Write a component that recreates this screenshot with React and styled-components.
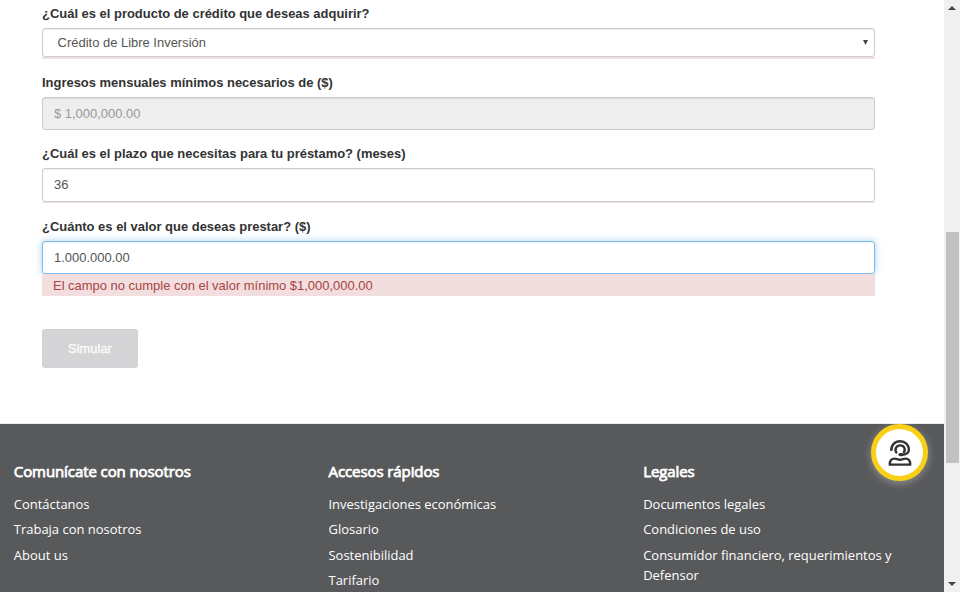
import React from "react";
import styled, { createGlobalStyle } from "styled-components";

const GlobalStyle = createGlobalStyle`
  * { box-sizing: border-box; }
  body { margin: 0; background: #fff; overflow: hidden; }
`;

const Page = styled.div`
  display: flex;
  width: 960px;
  height: 592px;
  overflow: hidden;
  font-family: "Liberation Sans", Arial, sans-serif;
  font-size: 12.96px;
`;

const Content = styled.main`
  width: 944px;
  height: 592px;
  display: flex;
  flex-direction: column;
`;

const Form = styled.form`
  height: 424px;
  flex: none;
  padding: 4px 69px 0 42px;
  border-bottom: 1px solid #ececee;
`;

const Field = styled.div`
  height: ${(p) => p.$height}px;
`;

const Label = styled.label`
  display: block;
  width: max-content;
  height: 20px;
  line-height: 20px;
  margin-bottom: 4px;
  font-size: 12.96px;
  font-weight: 700;
  color: #333;
`;

const Control = styled.div`
  display: flex;
  align-items: center;
  justify-content: space-between;
  height: ${(p) => p.$height}px;
  padding: 0 6px ${(p) => p.$lift || 0}px ${(p) => p.$indent || 11}px;
  border: 1px solid ${(p) => (p.$focused ? "#7fbcec" : "#ccc")};
  border-radius: 3px;
  background: ${(p) => (p.$disabled ? "#eee" : "#fff")};
  color: ${(p) => (p.$disabled ? "#999" : "#555")};
  box-shadow: ${(p) =>
    p.$focused
      ? "inset 0 1px 1px rgba(0,0,0,.075), 0 0 7px rgba(102,175,233,.6)"
      : "inset 0 1px 1px rgba(0,0,0,.075)"};
`;

const ErrorBar = styled.div`
  position: relative;
  height: ${(p) => p.$height}px;
  padding-left: 11px;
  line-height: 24px;
  background: #f2dede;
  color: #a94442;
`;

const SubmitButton = styled.button`
  display: block;
  width: 96px;
  height: 39px;
  padding: 0;
  border: 0;
  border-radius: 3px;
  background: #d4d4d6;
  color: #fafafa;
  font: 400 12.95px "Liberation Sans", Arial, sans-serif;
  -webkit-text-stroke: 0.4px #fafafa;
`;

const Footer = styled.footer`
  position: relative;
  height: 168px;
  display: grid;
  grid-template-columns: 314.7px 314.7px 314px;
  padding: 35px 0 0 13.8px;
  background: #58595b;
  color: #fff;
  font-family: "Open Sans", sans-serif;
`;

const FooterColumn = styled.section`
  min-width: 0;
`;

const FooterTitle = styled.h3`
  width: max-content;
  margin: 0 0 10.8px;
  font-size: 15px;
  line-height: 24px;
  font-weight: 400;
  letter-spacing: -0.09px;
  -webkit-text-stroke: 0.75px #fff;
`;

const FooterLink = styled.a`
  display: block;
  width: 262px;
  margin-bottom: 5.5px;
  font-size: 12.98px;
  line-height: 20px;
`;

const ChatButton = styled.div`
  position: absolute;
  top: 0.4px;
  left: 871px;
  width: 57px;
  height: 57px;
  display: flex;
  align-items: center;
  justify-content: center;
  border: 5px solid #f9d016;
  border-radius: 50%;
  background: #fff;
  box-shadow: 0 2px 8px rgba(255, 255, 255, 0.35);
`;

const ScrollBar = styled.aside`
  width: 16px;
  height: 592px;
  display: flex;
  flex-direction: column;
  align-items: center;
  justify-content: space-between;
  padding: 6px 0;
  background: #f0f0f0;
`;

const ScrollThumb = styled.div`
  width: 13px;
  height: 231px;
  margin: 221px 0 118px 1px;
  background: #c1c1c1;
`;

const Arrow = ({ up, w = 8, h = 4 }) => (
  <svg width={w} height={h} viewBox="0 0 8 4" preserveAspectRatio="none">
    <path d={up ? "M0 4L4 0L8 4Z" : "M0 0L4 4L8 0Z"} fill="#444" />
  </svg>
);

const AgentIcon = () => (
  <svg width="24" height="28" viewBox="0 0.4 24 28" fill="none" stroke="#333" strokeWidth="2.4">
    <path d="M3.3 12.2C2.9 6.5 7 2.6 12.1 2.6C17 2.6 20.9 6.5 20.9 11C20.9 14.4 18 16.3 13.5 16.3" />
    <path d="M8.9 14.6C5.9 11.4 8.1 6.8 12.2 6.8C16.4 6.8 18.3 11.6 15.2 14.2" />
    <path d="M12 16H14" strokeWidth="3.2" strokeLinecap="round" />
    <path d="M1.8 26C1.7 22 3.5 20 6.6 20C9 20 9.4 21.2 12 21.2S15 20 17.4 20C20.5 20 22.3 22 22.2 26Z" strokeLinejoin="round" />
  </svg>
);

const columns = [
  { title: "Comunícate con nosotros", links: ["Contáctanos", "Trabaja con nosotros", "About us"] },
  { title: "Accesos rápidos", links: ["Investigaciones económicas", "Glosario", "Sostenibilidad", "Tarifario"] },
  { title: "Legales", links: ["Documentos legales", "Condiciones de uso", "Consumidor financiero, requerimientos y Defensor"] },
];

export default function App() {
  return (
    <Page>
      <GlobalStyle />
      <Content>
        <Form>
          <Field $height={69}>
            <Label>¿Cuál es el producto de crédito que deseas adquirir?</Label>
            <Control $height={29} $indent={14.6}>
              <span>Crédito de Libre Inversión</span>
              <Arrow w={5} h={5} />
            </Control>
            <ErrorBar $height={2} />
          </Field>
          <Field $height={71}>
            <Label>Ingresos mensuales mínimos necesarios de ($)</Label>
            <Control $height={33} $disabled>
              <span>$ 1,000,000.00</span>
            </Control>
          </Field>
          <Field $height={73}>
            <Label>¿Cuál es el plazo que necesitas para tu préstamo? (meses)</Label>
            <Control $height={34} $lift={2}>
              <span>36</span>
            </Control>
            <ErrorBar $height={1} />
          </Field>
          <Field $height={112}>
            <Label>¿Cuánto es el valor que deseas prestar? ($)</Label>
            <Control $height={33} $focused>
              <span>1.000.000.00</span>
            </Control>
            <ErrorBar $height={22}>El campo no cumple con el valor mínimo $1,000,000.00</ErrorBar>
          </Field>
          <SubmitButton type="button">Simular</SubmitButton>
        </Form>
        <Footer>
          {columns.map((c) => (
            <FooterColumn key={c.title}>
              <FooterTitle>{c.title}</FooterTitle>
              {c.links.map((l) => (
                <FooterLink key={l}>{l}</FooterLink>
              ))}
            </FooterColumn>
          ))}
          <ChatButton>
            <AgentIcon />
          </ChatButton>
        </Footer>
      </Content>
      <ScrollBar>
        <Arrow up />
        <ScrollThumb />
        <Arrow />
      </ScrollBar>
    </Page>
  );
}
